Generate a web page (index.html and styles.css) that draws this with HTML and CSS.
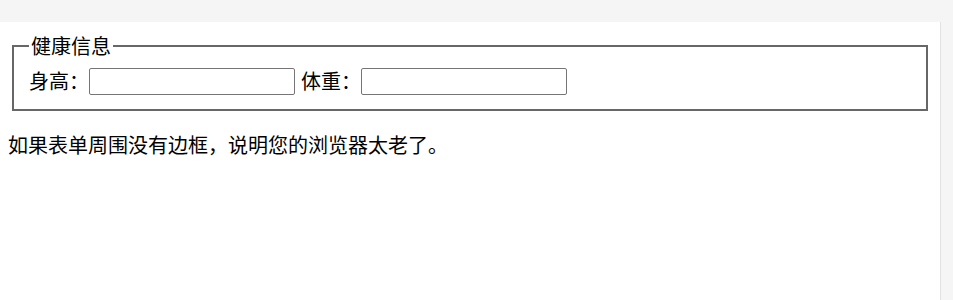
FILE: index.html
```html
<!DOCTYPE html>
<html lang="zh">
<head>
<meta charset="utf-8">
<link rel="stylesheet" href="styles.css">
</head>
<body>
<div class="frame">
  <div class="page">
    <fieldset class="box">
      <legend class="legend">健康信息</legend>
      <div class="row">
        <span class="label">身高：</span><input class="field" type="text"><span class="label second">体重：</span><input class="field" type="text">
      </div>
    </fieldset>
    <p class="note">如果表单周围没有边框，说明您的浏览器太老了。</p>
  </div>
  <div class="strip"></div>
</div>
</body>
</html>
```
FILE: styles.css
```css
html, body {
  margin: 0;
  padding: 0;
  background: #f5f5f5;
}
.frame {
  display: flex;
  margin-top: 22px;
  height: 278px;
}
.page {
  width: 941px;
  background: #ffffff;
  border-right: 1px solid #e2e2e2;
  padding: 10px 10px 0 10px;
  box-sizing: border-box;
  font-family: "Noto Sans CJK SC", "Microsoft YaHei", sans-serif;
  font-size: 20px;
  color: #000;
}
.strip {
  flex: 1;
  background: #f5f5f5;
}
.box {
  margin: 0 2px 0 2px;
  padding: 6px 13px 13px 15px;
  border: 2px solid #676767;
  border-radius: 0;
}
.legend {
  padding: 0 2px;
  line-height: 28px;
  font-size: 20px;
}
.row {
  display: flex;
  align-items: center;
  height: 30px;
  line-height: 28px;
}
.label {
  flex: 0 0 60px;
  width: 60px;
  white-space: nowrap;
}
.second {
  margin-left: 6px;
}
.field {
  flex: 0 0 206px;
  width: 206px;
  height: 27px;
  box-sizing: border-box;
  margin: 0;
  padding: 0 2px;
  border: 1px solid #767676;
  border-radius: 2px;
  background: #fff;
  font-size: 16px;
}
.note {
  margin: 20px 0 0 -2px;
  line-height: 28px;
}
```
